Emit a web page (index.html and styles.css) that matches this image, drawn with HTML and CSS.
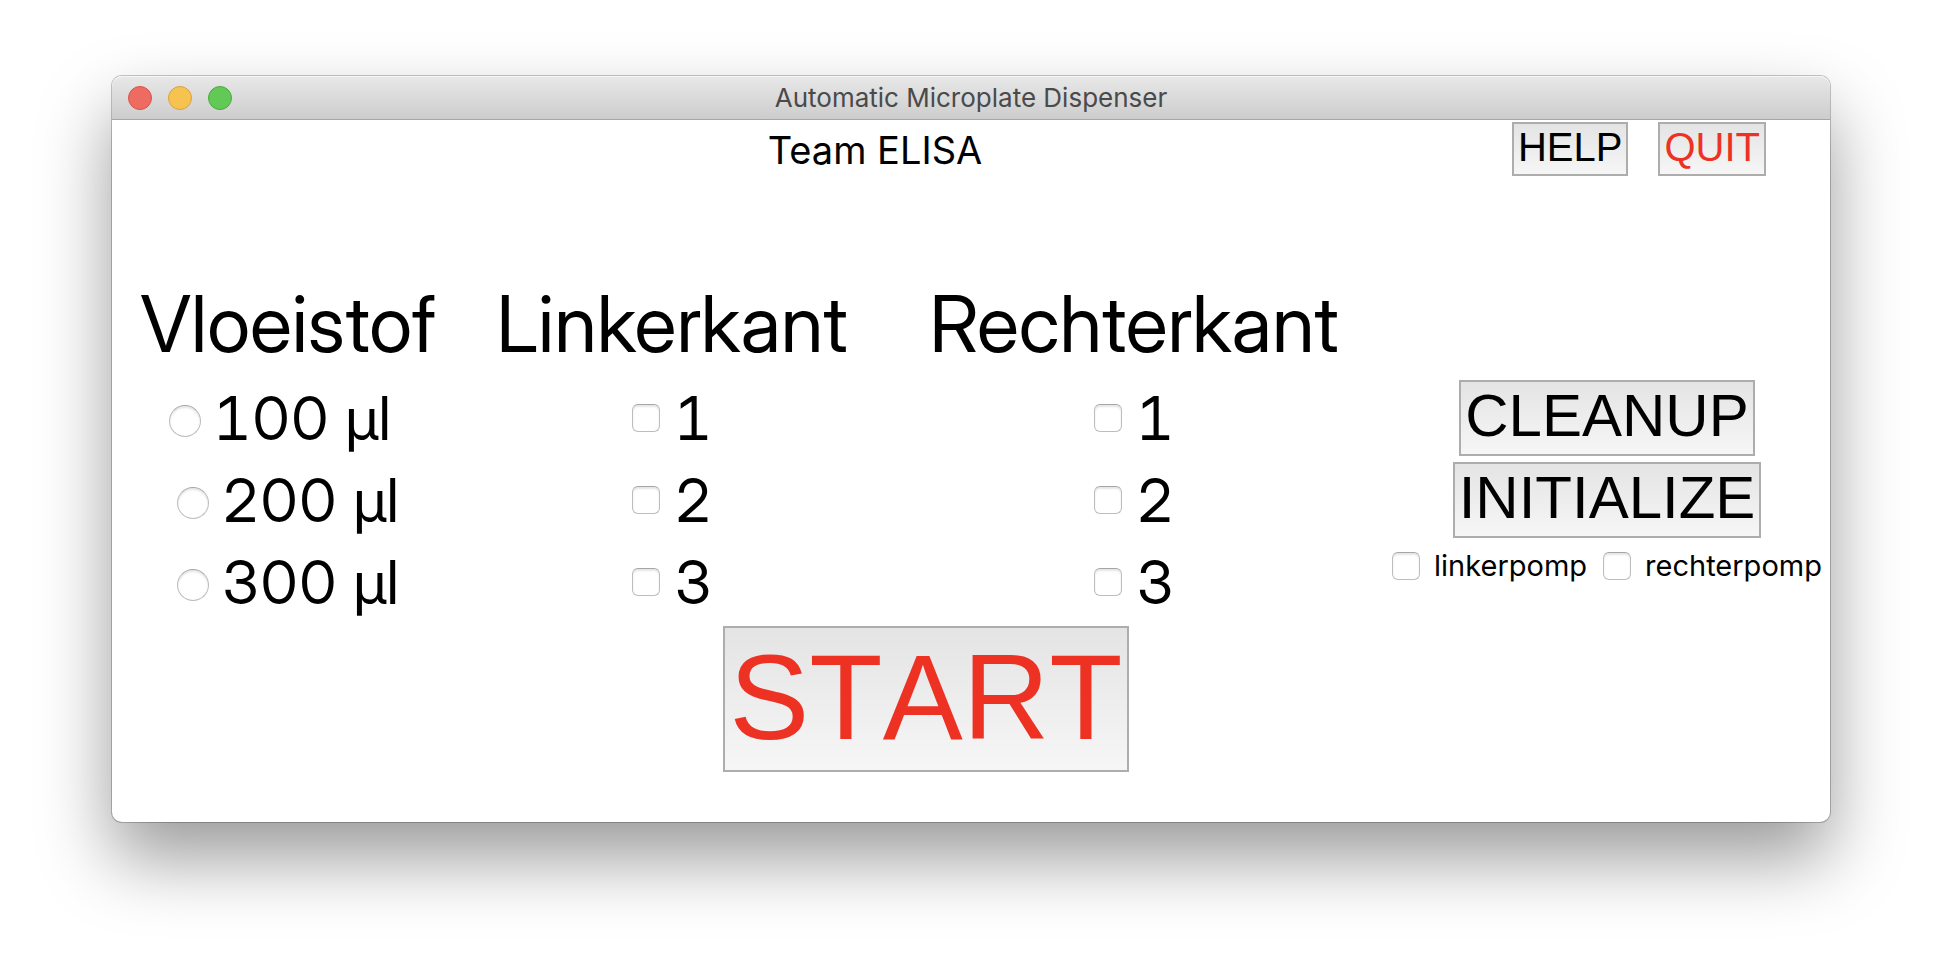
FILE: index.html
```html
<!DOCTYPE html>
<html lang="nl">
<head>
<meta charset="utf-8">
<title>Automatic Microplate Dispenser</title>
<link rel="stylesheet" href="styles.css">
</head>
<body>
<main class="window">
  <header class="titlebar">
    <div class="lights">
      <button class="light close" type="button" aria-label="Close"></button>
      <button class="light minimize" type="button" aria-label="Minimize"></button>
      <button class="light maximize" type="button" aria-label="Zoom"></button>
    </div>
    <h1 class="title">Automatic Microplate Dispenser</h1>
  </header>
  <div class="toolbar">
    <p class="team">Team ELISA</p>
    <button class="button small" type="button">HELP</button>
    <button class="button small red" type="button">QUIT</button>
  </div>
  <form class="panel">
    <h2 class="heading">Vloeistof</h2>
    <h2 class="heading">Linkerkant</h2>
    <h2 class="heading">Rechterkant</h2>
    <span></span>

    <label class="choice volume"><input class="radio" type="radio" name="volume">100 µl&nbsp;</label>
    <label class="choice"><input class="check" type="checkbox">1</label>
    <label class="choice"><input class="check" type="checkbox">1</label>
    <button class="button medium" type="button">CLEANUP</button>

    <label class="choice volume"><input class="radio" type="radio" name="volume">200 µl</label>
    <label class="choice"><input class="check" type="checkbox">2</label>
    <label class="choice"><input class="check" type="checkbox">2</label>
    <button class="button medium" type="button">INITIALIZE</button>

    <label class="choice volume"><input class="radio" type="radio" name="volume">300 µl</label>
    <label class="choice"><input class="check" type="checkbox">3</label>
    <label class="choice"><input class="check" type="checkbox">3</label>
    <div class="pumps">
      <label class="pump"><input class="check" type="checkbox">linkerpomp</label>
      <label class="pump"><input class="check" type="checkbox">rechterpomp</label>
    </div>

    <button class="button large red start" type="button">START</button>
  </form>
</main>
</body>
</html>
```
FILE: styles.css
```css
* {
  box-sizing: border-box;
}

body {
  margin: 0;
  padding: 76px 112px 148px;
  background: #fff;
  color: #000;
  font-family: Inter, "Liberation Sans", sans-serif;
}

h1, h2, p {
  margin: 0;
  font-weight: 400;
}

.window {
  padding-bottom: 47px;
  border-radius: 10px;
  background: #fff;
  box-shadow: 0 0 0 1px rgba(0, 0, 0, 0.22), 0 36px 72px rgba(0, 0, 0, 0.4);
}

.titlebar {
  display: grid;
  grid-template-columns: 1fr auto 1fr;
  align-items: center;
  height: 44px;
  padding: 0 16px;
  border-bottom: 1px solid #a6a6a6;
  border-radius: 10px 10px 0 0;
  background: linear-gradient(#e8e8e8, #cdcdcd);
  box-shadow: inset 0 1px #f6f6f6;
}

.lights {
  display: flex;
  gap: 16px;
}

.light {
  width: 24px;
  height: 24px;
  padding: 0;
  border: 1px solid;
  border-radius: 50%;
}

.close {
  border-color: #d5544b;
  background: #ed6b60;
}

.minimize {
  border-color: #dba23a;
  background: #f6c350;
}

.maximize {
  border-color: #4caa3f;
  background: #62c956;
}

.title {
  color: #4a4a4a;
  font-size: 26px;
  line-height: 34px;
}

.toolbar {
  display: flex;
  align-items: flex-start;
  gap: 30px;
  padding: 2px 64px 0 156px;
}

.team {
  flex: 1;
  padding-top: 4px;
  font-size: 38px;
  line-height: 48px;
  text-align: center;
}

.button {
  padding: 0 4px 4px;
  border: 2px solid #adadad;
  border-radius: 0;
  background: linear-gradient(#e4e4e4, #f6f6f6);
  color: #000;
  font-family: "Liberation Sans", Arial, sans-serif;
  font-kerning: none;
}

.small {
  font-size: 40px;
  line-height: 46px;
}

.medium {
  font-size: 60px;
  line-height: 68px;
}

.large {
  font-size: 120px;
  line-height: 138px;
}

.red {
  color: #ed3224;
}

.panel {
  display: grid;
  grid-template-columns: 352fr 416fr 508fr 438fr;
  grid-template-rows: auto repeat(3, 82px) 152px;
  align-items: center;
  justify-items: center;
  padding: 96px 4px 0 0;
}

.heading,
.choice {
  font-family: "Inter Display", Inter, "Liberation Sans", sans-serif;
}

.heading {
  padding-bottom: 1px;
  font-size: 78px;
  line-height: 104px;
}

.choice {
  display: flex;
  align-items: center;
  gap: 14px;
  font-size: 60px;
  font-variant-numeric: tabular-nums;
  line-height: 76px;
}

.volume {
  gap: 12px;
}

.radio,
.check {
  flex: none;
  width: 28px;
  height: 28px;
  margin: 0;
  appearance: none;
  border: 1px solid #bdbdbd;
  border-top-color: #a6a6a6;
  border-radius: 6px;
  background: #fff;
  box-shadow: inset 0 2px 2px rgba(0, 0, 0, 0.1);
}

.radio {
  width: 32px;
  height: 32px;
  margin-top: 6px;
  border-radius: 50%;
}

.pumps {
  display: flex;
  align-self: start;
  gap: 16px;
  padding-top: 7px;
}

.pump {
  display: flex;
  align-items: center;
  gap: 14px;
  font-size: 29px;
  line-height: 36px;
}

.start {
  grid-column: 2 / 4;
}
```
